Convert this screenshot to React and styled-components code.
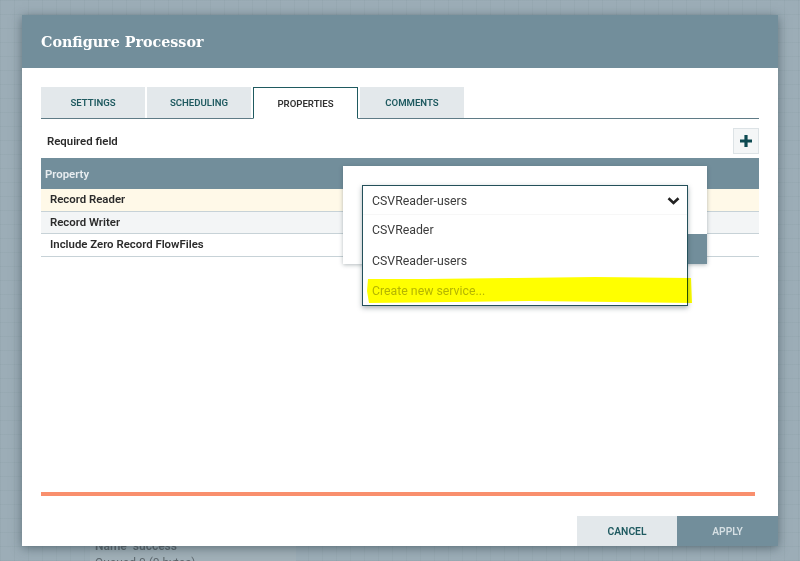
import React from "react";
import styled, { createGlobalStyle } from "styled-components";

const Global = createGlobalStyle`
  html, body {
    margin: 0;
    padding: 0;
    height: 100%;
    overflow: hidden;
  }
  #root { height: 100%; }
`;

const Canvas = styled.div`
  position: relative;
  width: 800px;
  height: 561px;
  overflow: hidden;
  font-family: Roboto, "Liberation Sans", sans-serif;
  background-color: #9cadb7;
  background-image:
    linear-gradient(rgba(120, 140, 150, 0.13) 1px, transparent 1px),
    linear-gradient(90deg, rgba(120, 140, 150, 0.13) 1px, transparent 1px);
  background-size: 14px 14px;
`;

const FlowNode = styled.div`
  position: absolute;
  left: 90px;
  top: 530px;
  width: 206px;
  height: 60px;
  padding-top: 9px;
  box-sizing: border-box;
  background: #a1b0b8;
  color: #5d676d;
  font-size: 12px;
  line-height: 14px;
`;

const FlowLine = styled.div`
  padding-left: 5px;
  margin-bottom: 3px;
  white-space: pre;
  font-weight: ${(p) => (p.$bold ? 600 : 400)};
`;

const Modal = styled.div`
  position: absolute;
  left: 22px;
  top: 15px;
  width: 756px;
  height: 531px;
  display: flex;
  flex-direction: column;
  background: #fff;
  box-shadow: 0 2px 10px rgba(40, 60, 70, 0.55);
`;

const Header = styled.header`
  height: 53px;
  flex: none;
  display: flex;
  align-items: center;
  padding-left: 19px;
  background: #728e9b;
  color: #fff;
  font-family: "DejaVu Serif", "Liberation Serif", serif;
  font-size: 14.3px;
  font-weight: 700;
`;

const Body = styled.div`
  flex: 1;
  display: flex;
  flex-direction: column;
  padding: 19px 19px 0;
`;

const Tabs = styled.div`
  display: flex;
  gap: 2px;
  box-sizing: border-box;
  height: 32px;
  flex: none;
  border-bottom: 1px solid #5f7b86;
`;

const Tab = styled.div`
  box-sizing: border-box;
  width: ${(p) => p.$width}px;
  height: ${(p) => (p.$active ? 32 : 31)}px;
  display: flex;
  align-items: center;
  justify-content: center;
  font-size: 9.6px;
  font-weight: 600;
  color: ${(p) => (p.$active ? "#333" : "#1f5a60")};
  background: ${(p) => (p.$active ? "#fff" : "#e3e8eb")};
  border: ${(p) => (p.$active ? "1px solid #1f5a60" : "none")};
  border-bottom: ${(p) => (p.$active ? "1px solid #fff" : "none")};
`;

const ToolRow = styled.div`
  height: 39px;
  flex: none;
  display: flex;
  align-items: center;
  justify-content: space-between;
  padding-top: 5px;
  box-sizing: border-box;
`;

const Required = styled.span`
  padding-left: 6px;
  font-size: 11.4px;
  font-weight: 600;
  color: #2b2b2b;
`;

const AddButton = styled.button`
  box-sizing: border-box;
  width: 26px;
  height: 26px;
  margin: 0;
  padding: 0;
  display: flex;
  align-items: center;
  justify-content: center;
  background: #f4f6f7;
  border: 1px solid #dde3e6;
`;

const Table = styled.div`
  flex: none;
`;

const HeadRow = styled.div`
  height: 31px;
  display: flex;
  align-items: center;
  padding-left: 4px;
  background: #728e9b;
  color: #e8edf0;
  font-size: 11.4px;
  font-weight: 600;
`;

const Row = styled.div`
  box-sizing: border-box;
  height: 22.6px;
  display: flex;
  align-items: center;
  padding: 0 0 1px 9px;
  font-size: 11.4px;
  font-weight: 600;
  color: #2b2b2b;
  background: ${(p) => p.$bg || "#fff"};
  border-bottom: 1px solid #c7d2d7;
`;

const Spacer = styled.div`
  flex: 1;
`;

const ProgressLine = styled.div`
  height: 4px;
  margin: 0 4px 20px 0;
  flex: none;
  background: #f98f6d;
`;

const Footer = styled.footer`
  flex: none;
  display: flex;
  justify-content: flex-end;
  height: 30px;
  margin-right: -19px;
`;

const FooterButton = styled.button`
  width: ${(p) => p.$width}px;
  margin: 0;
  padding: 0;
  border: none;
  font-family: inherit;
  font-size: 10.3px;
  font-weight: 600;
  color: ${(p) => (p.$primary ? "#d5dfe3" : "#1f5a60")};
  background: ${(p) => (p.$primary ? "#728e9b" : "#e3e8eb")};
`;

const InnerDialog = styled.div`
  position: absolute;
  left: 321px;
  top: 151px;
  width: 364px;
  height: 98px;
  display: flex;
  flex-direction: column;
  justify-content: flex-end;
  align-items: flex-end;
  background: #fff;
  box-shadow: 0 1px 4px rgba(40, 60, 70, 0.35);
`;

const InnerAction = styled.div`
  width: 100px;
  height: 30px;
  background: #728e9b;
`;

const Dropdown = styled.div`
  position: absolute;
  left: 340px;
  top: 170px;
  box-sizing: border-box;
  width: 326px;
  height: 121px;
  padding-top: 1px;
  background: #fff;
  border: 1px solid #24505a;
  box-shadow: 0 2px 5px rgba(40, 60, 70, 0.4);
  font-size: 12.3px;
  color: #3c3c3c;
`;

const Selected = styled.div`
  box-sizing: border-box;
  height: 28px;
  display: flex;
  align-items: center;
  justify-content: space-between;
  padding: 0 7px 0 9px;
  border-bottom: 1px solid #f7f7f7;
`;

const Option = styled.div`
  height: 30.4px;
  display: flex;
  align-items: center;
  padding-left: 9px;
  color: ${(p) => (p.$muted ? "#b5b5b5" : "#3c3c3c")};
`;

const Highlight = styled.svg`
  position: absolute;
  left: 343px;
  top: 262px;
  width: 327px;
  height: 27px;
  mix-blend-mode: multiply;
`;

export default function App() {
  return (
    <Canvas>
      <Global />
      <FlowNode>
        <FlowLine $bold>Name  success</FlowLine>
        <FlowLine>Queued 0 (0 bytes)</FlowLine>
      </FlowNode>
      <Modal>
        <Header>Configure Processor</Header>
        <Body>
          <Tabs>
            <Tab $width={104}>SETTINGS</Tab>
            <Tab $width={104}>SCHEDULING</Tab>
            <Tab $width={105} $active>PROPERTIES</Tab>
            <Tab $width={104}>COMMENTS</Tab>
          </Tabs>
          <ToolRow>
            <Required>Required field</Required>
            <AddButton aria-label="Add property">
              <svg width="14" height="14" viewBox="0 0 14 14">
                <path d="M5.4 1h3.2v4.4H13v3.2H8.6V13H5.4V8.6H1V5.4h4.4z" fill="#0e4a52" />
              </svg>
            </AddButton>
          </ToolRow>
          <Table>
            <HeadRow>Property</HeadRow>
            <Row $bg="#fff9e8">Record Reader</Row>
            <Row $bg="#f3f5f6">Record Writer</Row>
            <Row>Include Zero Record FlowFiles</Row>
          </Table>
          <Spacer />
          <ProgressLine />
          <Footer>
            <FooterButton $width={100}>CANCEL</FooterButton>
            <FooterButton $width={101} $primary>APPLY</FooterButton>
          </Footer>
        </Body>
        <InnerDialog>
          <InnerAction />
        </InnerDialog>
        <Dropdown>
          <Selected>
            CSVReader-users
            <svg width="13" height="8" viewBox="0 0 13 8">
              <path d="M1.5 1.3 6.5 6l5-4.7" fill="none" stroke="#222" strokeWidth="2.6" />
            </svg>
          </Selected>
          <Option>CSVReader</Option>
          <Option>CSVReader-users</Option>
          <Option $muted>Create new service...</Option>
        </Dropdown>
        <Highlight viewBox="0 0 327 27" preserveAspectRatio="none">
          <path d="M3 2 60 2 150 1 230 0 326 1 327 26 250 25 165 24 90 25 4 26 2 14z" fill="#ffff00" />
        </Highlight>
      </Modal>
    </Canvas>
  );
}
